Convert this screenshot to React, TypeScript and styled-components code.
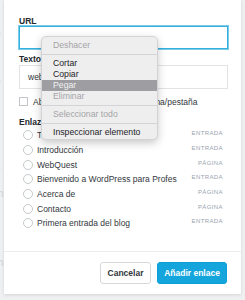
import styled, { createGlobalStyle } from "styled-components";

const GlobalStyle = createGlobalStyle`
  html, body {
    margin: 0;
    padding: 0;
    background: #eef0f2;
  }
  body {
    font-family: "Liberation Sans", Arial, sans-serif;
  }
`;

const Page = styled.div`
  position: relative;
  width: 245px;
  height: 300px;
  overflow: hidden;
  background: #eef0f2;
`;

const BackdropText = styled.div`
  display: flex;
  flex-direction: column;
  gap: 13px;
  padding: 28px 0 0 0;
  margin-left: -5px;
  color: #cfd3d7;
  font-size: 10px;
  line-height: 10px;
`;

const Modal = styled.div`
  position: absolute;
  left: 4px;
  top: 0;
  width: 237px;
  height: 294px;
  background: #fff;
  box-shadow: 0 1px 3px rgba(0, 0, 0, 0.12);
  display: flex;
  flex-direction: column;
`;

const Body = styled.div`
  flex: 1;
  padding: 16px 13px 0 15px;
  display: flex;
  flex-direction: column;
`;

const Label = styled.div<{ $top?: number }>`
  margin-top: ${(p) => p.$top ?? 0}px;
  height: 10px;
  line-height: 10px;
  font-size: 8.5px;
  font-weight: 700;
  color: #23282d;
  white-space: nowrap;
`;

const Input = styled.div<{ $focus?: boolean }>`
  box-sizing: border-box;
  height: ${(p) => (p.$focus ? 23 : 24)}px;
  margin-top: ${(p) => (p.$focus ? 0 : 1)}px;
  border: 1px solid ${(p) => (p.$focus ? "#34b0de" : "#e1e3e6")};
  box-shadow: ${(p) => (p.$focus ? "0 0 0 1px #7ccbea" : "none")};
  display: flex;
  align-items: center;
  padding-left: 8px;
  font-size: 8.5px;
  color: #32373c;
  white-space: nowrap;
  overflow: hidden;
`;

const CheckRow = styled.label`
  margin-top: 7px;
  height: 11px;
  display: flex;
  align-items: center;
  gap: 5px;
  font-size: 8.5px;
  color: #32373c;
  white-space: nowrap;
`;

const CheckBox = styled.span`
  box-sizing: border-box;
  width: 9px;
  height: 9px;
  border: 1px solid #c2c6ca;
  background: #fff;
`;

const List = styled.div`
  display: flex;
  flex-direction: column;
  padding: 1px 5px 0 4px;
`;

const Row = styled.div`
  height: 14.67px;
  display: flex;
  align-items: center;
  font-size: 8.5px;
  color: #32373c;
  white-space: nowrap;
`;

const Radio = styled.span`
  box-sizing: border-box;
  width: 10px;
  height: 10px;
  border-radius: 50%;
  border: 1px solid #c6cacd;
  margin-right: 4px;
  flex-shrink: 0;
`;

const Title = styled.span`
  flex: 1;
`;

const Tag = styled.span`
  font-size: 6px;
  letter-spacing: 0.4px;
  color: #97a3ae;
  padding-bottom: 4px;
`;

const Footer = styled.div`
  border-top: 1px solid #ebedef;
  padding: 10px 14px 10px 0;
  display: flex;
  justify-content: flex-end;
  gap: 6px;
`;

const Button = styled.button<{ $primary?: boolean }>`
  box-sizing: border-box;
  height: 22px;
  padding: 0;
  border-radius: 3px;
  border: 1px solid ${(p) => (p.$primary ? "#0aa0d6" : "#d6d9dc")};
  background: ${(p) => (p.$primary ? "#14a5dc" : "#fff")};
  color: ${(p) => (p.$primary ? "#fff" : "#32373c")};
  font-family: "Liberation Sans", Arial, sans-serif;
  font-size: 8.5px;
  font-weight: 700;
  white-space: nowrap;
  width: ${(p) => (p.$primary ? 70 : 51)}px;
`;

const Menu = styled.div`
  position: absolute;
  left: 41px;
  top: 36px;
  width: 117px;
  box-sizing: border-box;
  padding: 3px 0 1px;
  background: #eeeeef;
  border: 1px solid #d3d3d5;
  border-radius: 5px;
  box-shadow: 0 3px 9px rgba(0, 0, 0, 0.22);
`;

const MenuItem = styled.div<{ $disabled?: boolean; $active?: boolean }>`
  height: 11px;
  line-height: 11px;
  padding-left: 11px;
  font-size: 8.7px;
  color: ${(p) =>
    p.$active ? "#f2f2f2" : p.$disabled ? "#a4a4a6" : "#1d1d1f"};
  background: ${(p) => (p.$active ? "#9d9da2" : "transparent")};
  white-space: nowrap;
`;

const MenuSep = styled.div`
  height: 1px;
  margin: 3px 0;
  background: #d4d4d6;
`;

const links = [
  { title: "Tutoriales", type: "ENTRADA" },
  { title: "Introducción", type: "ENTRADA" },
  { title: "WebQuest", type: "PÁGINA" },
  { title: "Bienvenido a WordPress para Profes", type: "ENTRADA" },
  { title: "Acerca de", type: "PÁGINA" },
  { title: "Contacto", type: "PÁGINA" },
  { title: "Primera entrada del blog", type: "ENTRADA" },
];

const backdrop = ["o", "t", "a", "c", "s", "t", "e", "m", "j", "l", "m", "e"];

export default function App() {
  return (
    <Page>
      <GlobalStyle />
      <BackdropText>
        {backdrop.map((c, i) => (
          <span key={i}>{c}</span>
        ))}
      </BackdropText>

      <Modal>
        <Body>
          <Label>URL</Label>
          <Input $focus />
          <Label $top={5}>Texto</Label>
          <Input>webquest.es</Input>
          <CheckRow>
            <CheckBox />
            Abrir enlace en una nueva ventana/pestaña
          </CheckRow>
          <Label $top={10}>Enlazar a contenido existente</Label>
          <List>
            {links.map((l) => (
              <Row key={l.title}>
                <Radio />
                <Title>{l.title}</Title>
                <Tag>{l.type}</Tag>
              </Row>
            ))}
          </List>
        </Body>
        <Footer>
          <Button>Cancelar</Button>
          <Button $primary>Añadir enlace</Button>
        </Footer>
      </Modal>

      <Menu>
        <MenuItem $disabled>Deshacer</MenuItem>
        <MenuSep />
        <MenuItem>Cortar</MenuItem>
        <MenuItem>Copiar</MenuItem>
        <MenuItem $active>Pegar</MenuItem>
        <MenuItem $disabled>Eliminar</MenuItem>
        <MenuSep />
        <MenuItem $disabled>Seleccionar todo</MenuItem>
        <MenuSep />
        <MenuItem>Inspeccionar elemento</MenuItem>
      </Menu>
    </Page>
  );
}
